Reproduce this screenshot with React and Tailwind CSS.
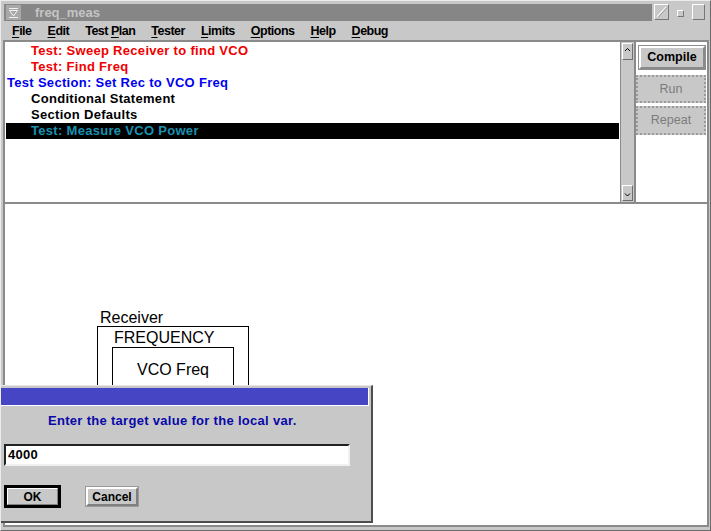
import React from 'react'

const menus = [
  { label: 'File', u: 0 },
  { label: 'Edit', u: 0 },
  { label: 'Test Plan', u: 5 },
  { label: 'Tester', u: 0 },
  { label: 'Limits', u: 0 },
  { label: 'Options', u: 0 },
  { label: 'Help', u: 0 },
  { label: 'Debug', u: 0 },
]

const rows = [
  { text: 'Test: Sweep Receiver to find VCO', indent: true, color: 'text-[#f00000]' },
  { text: 'Test: Find Freq', indent: true, color: 'text-[#f00000]' },
  { text: 'Test Section: Set Rec to VCO Freq', indent: false, color: 'text-[#0000f0]' },
  { text: 'Conditional Statement', indent: true, color: 'text-black' },
  { text: 'Section Defaults', indent: true, color: 'text-black' },
  { text: 'Test: Measure VCO Power', indent: true, color: 'text-[#1890b0]', selected: true },
]

function MenuItem({ label, u }) {
  return (
    <span className="text-[12.5px] font-bold tracking-[-0.5px] text-black leading-[18px]">
      {label.slice(0, u)}
      <span className="underline underline-offset-2">{label[u]}</span>
      {label.slice(u + 1)}
    </span>
  )
}

function WinIcon() {
  return (
    <svg width="15" height="15" viewBox="0 0 15 15" className="ml-[2px]">
      <rect x="0" y="0" width="15" height="15" fill="#a8a8a8" />
      <path d="M3 3.5H12" stroke="#f0f0f0" strokeWidth="1" />
      <path d="M3.5 5.5L7.5 11L11.5 5.5Z" fill="none" stroke="#f0f0f0" strokeWidth="1" />
      <path d="M3 12.5H12" stroke="#f0f0f0" strokeWidth="1" />
    </svg>
  )
}

export default function App() {
  return (
    <div className="relative w-[711px] h-[531px] overflow-hidden bg-[#c8c8c8] border border-t-[#ececec] border-l-[#ececec] border-r-[#6a6a6a] border-b-[#6a6a6a] font-['Liberation_Sans',Arial,sans-serif]">
      {/* title bar */}
      <div className="flex h-[21px] pt-[3px] pl-[3px]">
        <div className="flex w-[648px] h-[17px] items-center bg-[#868686]">
          <WinIcon />
          <span className="ml-[14px] text-[13px] font-bold text-[#c4c4c4] leading-[17px]">freq_meas</span>
        </div>
        <div className="ml-[2px] w-[15px] h-[16px] border border-t-white border-l-white border-r-[#777] border-b-[#777] bg-[#c8c8c8]">
          <svg width="13" height="14" viewBox="0 0 13 14">
            <path d="M2 12L11 2" stroke="#f4f4f4" strokeWidth="1.3" />
            <path d="M3 12.5L12 2.5" stroke="#8a8a8a" strokeWidth="0.8" />
          </svg>
        </div>
        <div className="ml-[8px] mt-[6px] w-[7px] h-[7px] border border-t-white border-l-white border-r-[#777] border-b-[#777] bg-[#c8c8c8]" />
        <div className="ml-[8px] w-[13px] h-[16px] border border-t-white border-l-white border-r-[#777] border-b-[#777] bg-[#c8c8c8]" />
      </div>

      {/* menu bar */}
      <div className="flex h-[18px] items-center gap-[16px] pl-[11px]">
        {menus.map((m) => (
          <MenuItem key={m.label} label={m.label} u={m.u} />
        ))}
      </div>

      {/* main content */}
      <div className="ml-[2px] w-[706px] h-[487px] flex flex-col border-2 border-[#8a8a8a] bg-white">
        <div className="flex h-[162px] border-b-2 border-[#8a8a8a]">
          {/* list */}
          <div className="w-[615px] pl-[1px] pr-[1px] pt-[1px] text-[13px] font-bold tracking-[0.3px]">
            {rows.map((r) => (
              <div
                key={r.text}
                className={`h-[16px] leading-[16px] whitespace-nowrap ${r.indent ? 'pl-[25px]' : 'pl-[1px]'} ${r.selected ? 'bg-black' : ''} ${r.color}`}
              >
                {r.text}
              </div>
            ))}
          </div>
          {/* scrollbar */}
          <div className="w-[14px] flex flex-col justify-between items-center border-l border-[#8a8a8a] bg-[#c8c8c8] pt-[1px] pb-[1px]">
            <div className="w-[11px] h-[17px] flex justify-center border border-t-white border-l-white border-r-[#6e6e6e] border-b-[#6e6e6e] bg-[#c8c8c8]">
              <svg width="7" height="6" viewBox="0 0 7 6" className="mt-[3px]">
                <path d="M1 4L3.5 1.5L6 4" fill="none" stroke="#000" strokeWidth="1" />
              </svg>
            </div>
            <div className="w-[11px] h-[16px] flex justify-center border border-t-white border-l-white border-r-[#6e6e6e] border-b-[#6e6e6e] bg-[#c8c8c8]">
              <svg width="7" height="6" viewBox="0 0 7 6" className="mt-[6px]">
                <path d="M1 1.5L3.5 4L6 1.5" fill="none" stroke="#000" strokeWidth="1" />
              </svg>
            </div>
          </div>
          {/* buttons column */}
          <div className="w-[71px] flex flex-col border-l-2 border-[#8a8a8a] bg-white">
            <div className="ml-[2px] mt-[3px] w-[68px] h-[25px] border border-[#8e8e8e]">
              <div className="h-full flex items-center justify-center border-2 border-t-white border-l-white border-r-[#8a8a8a] border-b-[#8a8a8a] bg-[#c8c8c8] text-[12.5px] font-bold text-black">
                Compile
              </div>
            </div>
            <div className="mt-[5px] w-[70px] h-[28px] flex items-center justify-center border-2 border-dotted border-[#9a9a9a] bg-[#c8c8c8] text-[12.5px] text-[#7c7c7c]">
              Run
            </div>
            <div className="mt-[3px] w-[70px] h-[29px] flex items-center justify-center border-2 border-dotted border-[#9a9a9a] bg-[#c8c8c8] text-[12.5px] text-[#7c7c7c]">
              Repeat
            </div>
          </div>
        </div>

        {/* canvas */}
        <div className="relative flex-1 bg-white text-[16px] text-black">
          <div className="absolute left-[95px] top-[106px] leading-[16px]">Receiver</div>
          <div className="absolute left-[92px] top-[122px] w-[152px] h-[140px] border border-black">
            <div className="pl-[16px] mt-[3px] leading-[16px]">FREQUENCY</div>
            <div className="ml-[14px] mt-[1px] w-[122px] h-[100px] border border-black pt-[14px] text-center leading-[16px]">
              VCO Freq
            </div>
          </div>
        </div>
      </div>

      {/* dialog */}
      <div className="absolute left-[-1px] top-[384px] w-[373px] h-[138px] bg-[#c8c8c8] border-t border-[#e6e6e6] border-r-2 border-b-2 border-r-[#4e4e4e] border-b-[#4e4e4e] pt-[2px]">
        <div className="mr-[2px] h-[18px] bg-[#4646c4] border-b border-r border-white" />
        <div className="mt-[7px] pl-[48px] h-[16px] leading-[16px] text-[13px] font-bold tracking-[0.3px] text-[#0808a8] whitespace-nowrap">
          Enter the target value for the local var.
        </div>
        <div className="ml-[4px] mt-[15px] w-[346px] h-[22px] border-2 border-t-[#222] border-l-[#222] border-r-[#f0f0f0] border-b-[#f0f0f0] bg-white pl-[2px] text-[13px] font-bold tracking-[0.3px] leading-[18px] text-black">
          4000
        </div>
        <div className="flex items-center mt-[19px] ml-[4px]">
          <div className="w-[57px] h-[23px] border-[3px] border-black">
            <div className="h-full flex items-center justify-center border border-t-white border-l-white border-r-[#808080] border-b-[#808080] bg-[#c8c8c8] text-[12px] font-bold text-black">
              OK
            </div>
          </div>
          <div className="ml-[24px] w-[54px] h-[21px] border border-[#9a9a9a]">
            <div className="h-full flex items-center justify-center border-2 border-t-white border-l-white border-r-[#808080] border-b-[#808080] bg-[#c8c8c8] text-[12px] font-bold text-black">
              Cancel
            </div>
          </div>
        </div>
      </div>
    </div>
  )
}
